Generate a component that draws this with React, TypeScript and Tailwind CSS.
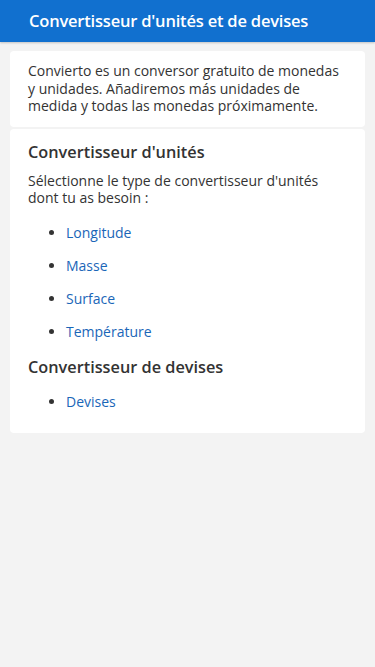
export default function App() {
  const units = ["Longitude", "Masse", "Surface", "Température"];
  return (
    <div className="min-h-[667px] bg-[#f3f3f3] font-['Open_Sans',sans-serif] text-[#333]">
      {/* Header */}
      <header className="h-[42px] bg-[#1170cf] flex items-center px-[29px] shadow-[0_1px_2px_rgba(0,0,0,0.2)]">
        <h1 className="text-white font-semibold text-[16.5px] tracking-[-0.2px]">
          Convertisseur d'unités et de devises
        </h1>
      </header>

      <main className="px-[10px] pt-[9px] flex flex-col gap-[2px]">
        <section className="bg-white rounded-[4px] px-[18px] pt-[11px] pb-[12px]">
          <p className="text-[14px] leading-[17.5px]">
            Convierto es un conversor gratuito de monedas y unidades. Añadiremos más unidades de medida y todas las monedas próximamente.
          </p>
        </section>

        <section className="bg-white rounded-[4px] px-[18px] pt-[12px] pb-[22px]">
          <h2 className="text-[16.3px] font-semibold leading-[22px]">Convertisseur d'unités</h2>
          <p className="text-[14px] leading-[17.5px] mt-[9px]">
            Sélectionne le type de convertisseur d'unités dont tu as besoin :
          </p>
          <ul className="list-disc pl-[38px] mt-[16px] flex flex-col gap-[14px] marker:text-[#333]">
            {units.map((u) => (
              <li key={u} className="text-[14px] leading-[19px]">
                <a href="#" className="text-[#1a66b8]">{u}</a>
              </li>
            ))}
          </ul>
          <h2 className="text-[16.3px] font-semibold leading-[22px] mt-[15px]">Convertisseur de devises</h2>
          <ul className="list-disc pl-[38px] mt-[14px] marker:text-[#333]">
            <li className="text-[14px] leading-[19px]">
              <a href="#" className="text-[#1a66b8]">Devises</a>
            </li>
          </ul>
        </section>
      </main>
    </div>
  );
}
